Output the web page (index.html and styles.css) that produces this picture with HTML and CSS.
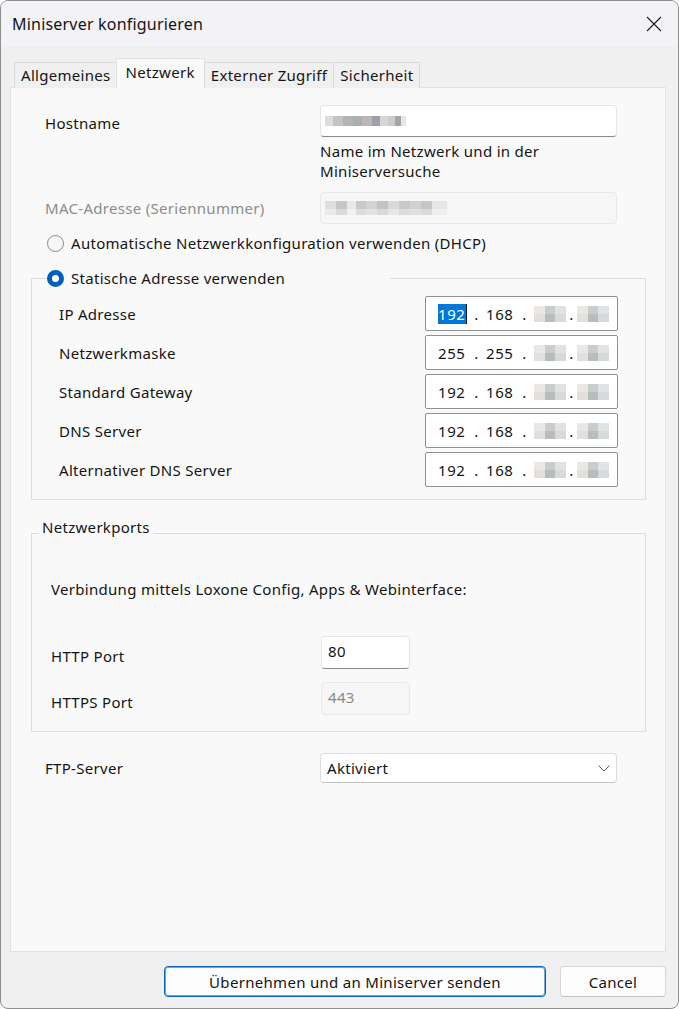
FILE: index.html
```html
<!DOCTYPE html>
<html lang="de">
<head>
    <meta charset="UTF-8">
    <meta name="viewport" content="width=device-width, initial-scale=1.0">
    <title>Miniserver konfigurieren</title>
    <link rel="stylesheet" href="styles.css">
</head>
<body>
    <div class="window">
        <div class="titlebar">
            <span class="title">Miniserver konfigurieren</span>
            <button class="close" aria-label="Schließen">
                <svg width="16" height="16" viewBox="0 0 16 16">
                    <path d="M1 1 L15 15 M15 1 L1 15" stroke="#1a1a1a" stroke-width="1.1" fill="none"/>
                </svg>
            </button>
        </div>

        <div class="dialog">
            <div class="tabs">
                <div class="tab">Allgemeines</div>
                <div class="tab active">Netzwerk</div>
                <div class="tab">Externer Zugriff</div>
                <div class="tab">Sicherheit</div>
            </div>

            <div class="panel">
                <div class="row host-row">
                    <label>Hostname</label>
                    <div class="field"><span class="mask mask-host"></span></div>
                </div>
                <p class="hint">Name im Netzwerk und in der<br>Miniserversuche</p>

                <div class="row mac-row">
                    <label class="disabled">MAC-Adresse (Seriennummer)</label>
                    <div class="field field-disabled"><span class="mask mask-mac"></span></div>
                </div>

                <label class="radio dhcp"><input type="radio" name="mode"> Automatische Netzwerkkonfiguration verwenden (DHCP)</label>

                <fieldset class="group static">
                    <legend><label class="radio"><input type="radio" name="mode" checked> Statische Adresse verwenden</label></legend>
                    <div class="ip-grid">
                        <span>IP Adresse</span>
                        <div class="ip"><span class="oct sel">192</span><span class="dot">.</span><span class="oct">168</span><span class="dot">.</span><span class="mask mask-oct"></span><span class="dot dot-narrow">.</span><span class="mask mask-oct"></span></div>
                        <span>Netzwerkmaske</span>
                        <div class="ip"><span class="oct">255</span><span class="dot">.</span><span class="oct">255</span><span class="dot">.</span><span class="mask mask-oct"></span><span class="dot dot-narrow">.</span><span class="mask mask-oct"></span></div>
                        <span>Standard Gateway</span>
                        <div class="ip"><span class="oct">192</span><span class="dot">.</span><span class="oct">168</span><span class="dot">.</span><span class="mask mask-oct"></span><span class="dot dot-narrow">.</span><span class="mask mask-oct"></span></div>
                        <span>DNS Server</span>
                        <div class="ip"><span class="oct">192</span><span class="dot">.</span><span class="oct">168</span><span class="dot">.</span><span class="mask mask-oct"></span><span class="dot dot-narrow">.</span><span class="mask mask-oct"></span></div>
                        <span>Alternativer DNS Server</span>
                        <div class="ip"><span class="oct">192</span><span class="dot">.</span><span class="oct">168</span><span class="dot">.</span><span class="mask mask-oct"></span><span class="dot dot-narrow">.</span><span class="mask mask-oct"></span></div>
                    </div>
                </fieldset>

                <fieldset class="group ports">
                    <legend>Netzwerkports</legend>
                    <p class="ports-note">Verbindung mittels Loxone Config, Apps &amp; Webinterface:</p>
                    <div class="port-grid">
                        <span>HTTP Port</span>
                        <div class="field port">80</div>
                        <span>HTTPS Port</span>
                        <div class="field port field-disabled">443</div>
                    </div>
                </fieldset>

                <div class="row ftp-row">
                    <label>FTP-Server</label>
                    <div class="select">
                        <span>Aktiviert</span>
                        <svg width="12" height="7" viewBox="0 0 12 7">
                            <path d="M0.5 0.5 L6 6 L11.5 0.5" stroke="#5c5c5c" stroke-width="1" fill="none"/>
                        </svg>
                    </div>
                </div>
            </div>

            <div class="footer">
                <button class="btn btn-default">Übernehmen und an Miniserver senden</button>
                <button class="btn btn-cancel">Cancel</button>
            </div>
        </div>
    </div>
</body>
</html>
```

FILE: styles.css
```css
* {
    box-sizing: border-box;
}
html {
    background: #ffffff;
}
body {
    margin: 0;
    font-family: "Noto Sans", "Open Sans", sans-serif;
    font-size: 15px;
    letter-spacing: 0.3px;
    color: #141414;
}
.window {
    width: 679px;
    height: 1009px;
    border: 1px solid #8e8e8e;
    border-radius: 8px;
    overflow: hidden;
    background: #f0f0f0;
    display: flex;
    flex-direction: column;
}
.titlebar {
    height: 45px;
    flex-shrink: 0;
    background: #f3f2f7;
    display: flex;
    align-items: center;
    justify-content: space-between;
    padding: 0 16px 0 11px;
}
.title {
    font-size: 16px;
    letter-spacing: 0.2px;
}
.close {
    width: 16px;
    height: 16px;
    padding: 0;
    border: none;
    background: none;
    display: flex;
}
.dialog {
    flex: 1;
    padding: 12px 12px 0 9px;
    display: flex;
    flex-direction: column;
}

/* tabs */
.tabs {
    display: flex;
    align-items: flex-end;
    height: 30px;
    padding-left: 4px;
    margin-bottom: -1px;
    position: relative;
    z-index: 1;
}
.tab {
    height: 26px;
    padding: 0 6px;
    line-height: 24px;
    border: 1px solid #dadada;
    border-bottom: none;
    background: #f0f0f0;
    margin-right: -1px;
}
.tab.active {
    height: 30px;
    line-height: 26px;
    padding: 0 9px;
    background: #f9f9f9;
    border-color: #e2e2e2;
    margin: 0 -1px 0 -1px;
}
.panel {
    height: 865px;
    background: #f9f9f9;
    border: 1px solid #e2e2e2;
}

/* form rows */
.row {
    display: grid;
    grid-template-columns: 275px 297px;
    padding-left: 34px;
}
.row label {
    line-height: 20px;
}
.host-row {
    margin-top: 17px;
}
.host-row label {
    margin-top: 8px;
}
.field {
    height: 32px;
    background: #ffffff;
    border: 1px solid #e6e6e6;
    border-bottom-color: #8a8a8a;
    border-radius: 4px;
    display: flex;
    align-items: center;
    padding: 0 4px;
}
.field-disabled {
    background: #f6f6f6;
    border-color: #e8e8e8;
    color: #8a8a8a;
}
.hint {
    margin: 4px 0 0 309px;
    line-height: 20px;
}
.mac-row {
    margin-top: 11px;
}
.mac-row label {
    margin-top: 6px;
}
.disabled {
    color: #8c8c8c;
}

/* radio buttons */
.radio {
    display: flex;
    align-items: center;
    gap: 7px;
    line-height: 20px;
}
.radio input {
    appearance: none;
    width: 17px;
    height: 17px;
    margin: 0;
    border: 1px solid #8a8a8a;
    border-radius: 50%;
    background: #f7f7f7;
}
.radio input:checked {
    border: 5px solid #005fb8;
    background: #ffffff;
}
.dhcp {
    margin: 9px 0 0 36px;
}

/* group boxes */
.group {
    width: 615px;
    margin: 15px 0 0 20px;
    padding: 0;
    border: 1px solid #dcdcdc;
}
.static legend {
    width: 344px;
    margin-left: 14px;
    padding: 0 0 0 1px;
}
.static {
    padding-bottom: 12px;
}
.ip-grid {
    display: grid;
    grid-template-columns: 366px 193px;
    row-gap: 4px;
    align-items: center;
    padding-left: 27px;
    margin-top: 8px;
}
.ip {
    height: 35px;
    background: #ffffff;
    border: 1px solid #8f8f8f;
    border-radius: 2px;
    display: flex;
    align-items: center;
    padding-left: 12px;
    letter-spacing: 0.6px;
}
.oct {
    width: 29px;
}
.oct.sel {
    width: 29px;
    background: #0078d7;
    color: #ffffff;
    border-right: 1px solid #1a1a1a;
}
.dot {
    width: 19px;
    text-align: center;
}
.dot-narrow {
    width: 11px;
}

/* blurred values */
.mask {
    display: inline-block;
}
.mask-host {
    width: 81px;
    height: 10px;
    background: linear-gradient(90deg, #dcdcdc 0 10%, #c2c5c7 10% 22%, #b3b3b3 22% 34%, #a9aeb0 34% 46%, #bab6b6 46% 58%, #9ea0a7 58% 68%, #d6d6d6 68% 78%, #c9cccd 78% 86%, #a3a5ab 86% 94%, #e6e6e6 94%);
}
.mask-mac {
    width: 122px;
    height: 14px;
    background:
        linear-gradient(180deg, rgba(255,255,255,0) 0 55%, rgba(255,255,255,0.35) 55%),
        linear-gradient(90deg, #dedede 0 9%, #c6c6c6 9% 18%, #e8e8e8 18% 25%, #c9c9c9 25% 34%, #d4d2d2 34% 43%, #c3c3c5 43% 52%, #d9d9d9 52% 61%, #c7c9c9 61% 70%, #d2d0d0 70% 79%, #c6c6c6 79% 88%, #e6e6e6 88%);
}
.mask-oct {
    width: 32px;
    height: 16px;
    background:
        linear-gradient(180deg, rgba(255,255,255,0.25) 0 50%, rgba(255,255,255,0) 50%),
        linear-gradient(90deg, #e3dfdd 0 33%, #b8bcbc 33% 66%, #d6dadb 66%);
}

/* ports */
.ports legend {
    margin-left: 7px;
    padding: 0 3px 12px 3px;
    line-height: 16px;
}
.ports {
    margin-top: 19px;
    padding-bottom: 16px;
}
.ports-note {
    margin: 32px 0 0 19px;
    line-height: 20px;
}
.port-grid {
    display: grid;
    grid-template-columns: 270px 89px;
    row-gap: 13px;
    align-items: center;
    padding-left: 19px;
    margin-top: 37px;
}
.port-grid span {
    margin-top: 7px;
}
.port {
    width: 89px;
    height: 33px;
    padding: 0 6px 4px;
}
.ftp-row {
    margin-top: 21px;
}
.ftp-row label {
    margin-top: 5px;
}
.select {
    height: 30px;
    background: #ffffff;
    border: 1px solid #dcdcdc;
    border-bottom-color: #c4c4c4;
    border-radius: 4px;
    display: flex;
    align-items: center;
    justify-content: space-between;
    padding: 0 6px 0 6px;
}

/* buttons */
.footer {
    display: flex;
    justify-content: flex-end;
    gap: 14px;
    padding-top: 14px;
}
.btn {
    height: 31px;
    font-family: inherit;
    font-size: 15px;
    letter-spacing: 0.3px;
    color: #141414;
    background: #fdfdfd;
    border: 1px solid #d6d6d6;
    border-bottom-color: #c2c2c2;
    border-radius: 4px;
}
.btn-default {
    width: 382px;
    border: 1px solid #0a64c4;
    box-shadow: inset 0 0 0 1px #6aa5e0;
}
.btn-cancel {
    width: 106px;
}
```
